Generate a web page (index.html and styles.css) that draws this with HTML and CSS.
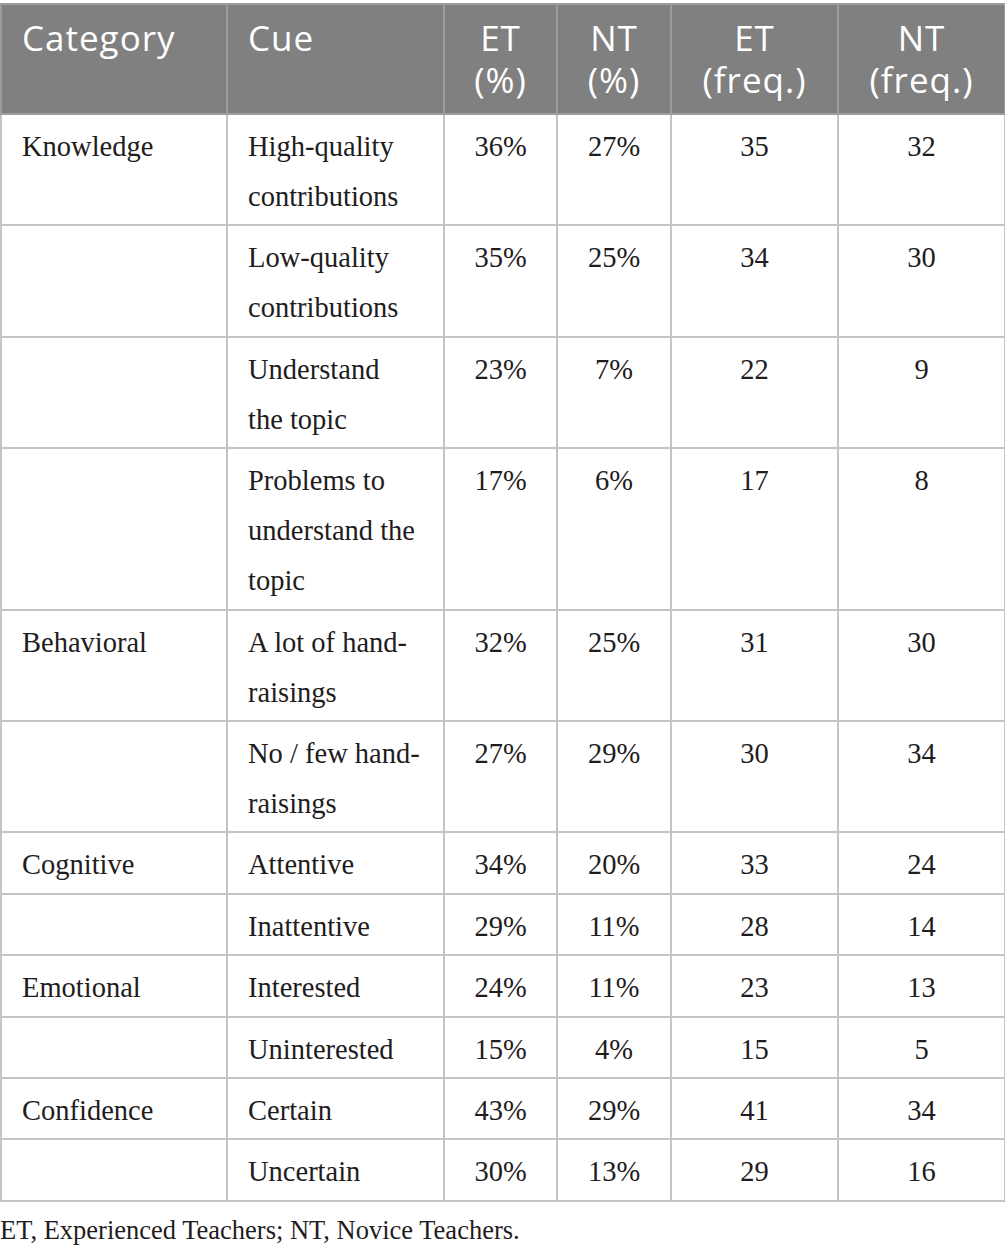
FILE: index.html
```html
<!DOCTYPE html>
<html>
<head>
<meta charset="utf-8">
<link rel="stylesheet" href="styles.css">
</head>
<body>
<table class="data">
  <colgroup>
    <col class="c1"><col class="c2"><col class="c3"><col class="c4"><col class="c5"><col class="c6">
  </colgroup>
  <thead>
    <tr>
      <th class="left">Category</th>
      <th class="left">Cue</th>
      <th>ET<br>(%)</th>
      <th>NT<br>(%)</th>
      <th>ET<br>(freq.)</th>
      <th>NT<br>(freq.)</th>
    </tr>
  </thead>
  <tbody>
    <tr><td class="left">Knowledge</td><td class="left">High-quality<br>contributions</td><td>36%</td><td>27%</td><td>35</td><td>32</td></tr>
    <tr><td class="left"></td><td class="left">Low-quality<br>contributions</td><td>35%</td><td>25%</td><td>34</td><td>30</td></tr>
    <tr><td class="left"></td><td class="left">Understand<br>the topic</td><td>23%</td><td>7%</td><td>22</td><td>9</td></tr>
    <tr><td class="left"></td><td class="left">Problems to<br>understand the<br>topic</td><td>17%</td><td>6%</td><td>17</td><td>8</td></tr>
    <tr><td class="left">Behavioral</td><td class="left">A lot of hand-<br>raisings</td><td>32%</td><td>25%</td><td>31</td><td>30</td></tr>
    <tr><td class="left"></td><td class="left">No / few hand-<br>raisings</td><td>27%</td><td>29%</td><td>30</td><td>34</td></tr>
    <tr><td class="left">Cognitive</td><td class="left">Attentive</td><td>34%</td><td>20%</td><td>33</td><td>24</td></tr>
    <tr><td class="left"></td><td class="left">Inattentive</td><td>29%</td><td>11%</td><td>28</td><td>14</td></tr>
    <tr><td class="left">Emotional</td><td class="left">Interested</td><td>24%</td><td>11%</td><td>23</td><td>13</td></tr>
    <tr><td class="left"></td><td class="left">Uninterested</td><td>15%</td><td>4%</td><td>15</td><td>5</td></tr>
    <tr><td class="left">Confidence</td><td class="left">Certain</td><td>43%</td><td>29%</td><td>41</td><td>34</td></tr>
    <tr><td class="left"></td><td class="left">Uncertain</td><td>30%</td><td>13%</td><td>29</td><td>16</td></tr>
  </tbody>
</table>
<p class="note">ET, Experienced Teachers; NT, Novice Teachers.</p>
</body>
</html>
```

FILE: styles.css
```css
html, body {
  margin: 0;
  padding: 0;
  background: #ffffff;
}
body {
  padding-top: 3px;
}
.data {
  width: 1004px;
  border-collapse: collapse;
  table-layout: fixed;
  font-family: "Liberation Serif", serif;
  color: #1f1c1d;
}
.c1 { width: 226px; }
.c2 { width: 217px; }
.c3 { width: 113px; }
.c4 { width: 114px; }
.c5 { width: 167px; }
.c6 { width: 167px; }
.data th {
  background: #808080;
  color: #ffffff;
  font-family: "Open Sans", sans-serif;
  font-weight: 400;
  font-size: 35px;
  line-height: 42px;
  letter-spacing: 1px;
  padding: 12px 6px 12px;
  text-align: center;
  vertical-align: top;
  border: 2px solid #9c9c9c;
}
.data td {
  font-size: 28.5px;
  line-height: 50px;
  padding: 7px 8px 2.4px;
  text-align: center;
  vertical-align: top;
  border: 2px solid #c4c4c4;
}
.data th.left, .data td.left {
  text-align: left;
  padding-left: 20px;
}
.note {
  margin: 8px 0 0;
  font-family: "Liberation Serif", serif;
  font-size: 26.5px;
  line-height: 40px;
  color: #1f1c1d;
}
```
